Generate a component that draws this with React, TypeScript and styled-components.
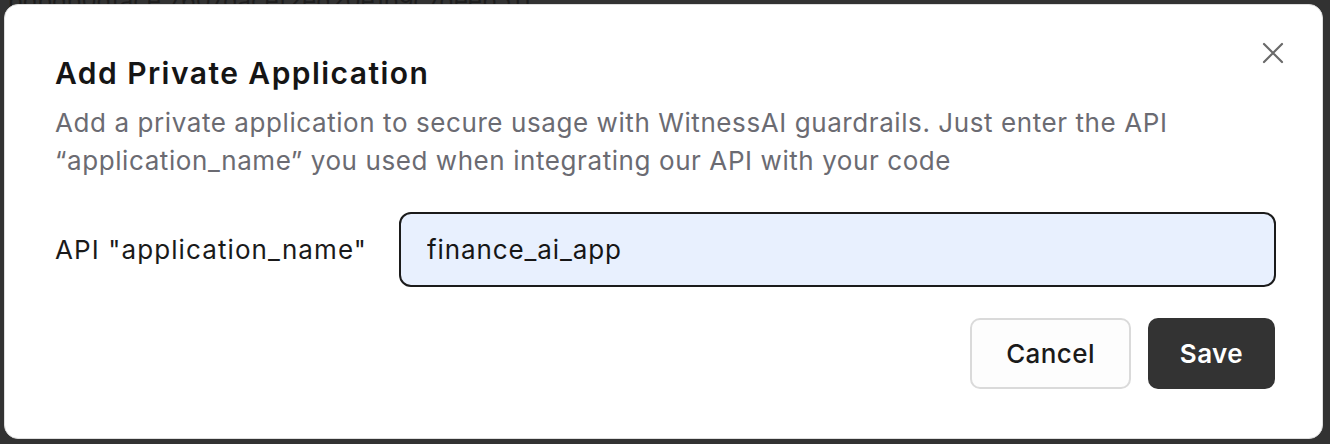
import React from "react";
import styled, { createGlobalStyle } from "styled-components";

const Global = createGlobalStyle`
  html, body { margin: 0; padding: 0; }
  body {
    width: 1330px;
    height: 444px;
    overflow: hidden;
    background: #2f2f2f;
    font-family: Inter, "Noto Sans", "Liberation Sans", sans-serif;
  }
`;

const Backdrop = styled.div`
  position: relative;
  width: 1330px;
  height: 444px;
  background: #323232;
  overflow: hidden;
`;

const BehindText = styled.div`
  padding: 0 0 0 8px;
  margin-top: -14px;
  font-size: 24px;
  color: #1d1d1d;
  white-space: nowrap;
`;

const Modal = styled.div`
  position: absolute;
  left: 4px;
  top: 4px;
  right: 7px;
  bottom: 5px;
  box-sizing: border-box;
  background: #ffffff;
  border: 1px solid #dedede;
  border-radius: 14px;
  padding: 46px 50px 0 50px;
  display: flex;
  flex-direction: column;
`;

const CloseButton = styled.button`
  position: absolute;
  top: 32px;
  right: 33px;
  width: 32px;
  height: 32px;
  border: none;
  background: transparent;
  padding: 0;
  display: flex;
  align-items: center;
  justify-content: center;
  cursor: pointer;
`;

const Title = styled.h2`
  margin: 0;
  font-size: 30px;
  font-weight: 600;
  letter-spacing: 1.45px;
  color: #151515;
  line-height: 44px;
`;

const Description = styled.p`
  margin: 9px 0 0 0;
  font-size: 26px;
  letter-spacing: 0.58px;
  line-height: 38px;
  color: #6b6b72;
  max-width: 1180px;
`;

const FieldRow = styled.div`
  margin-top: 32px;
  display: flex;
  align-items: center;
  gap: 32px;
`;

const Label = styled.label`
  font-size: 26px;
  font-weight: 400;
  letter-spacing: 1.1px;
  color: #1a1a1a;
  white-space: nowrap;
  width: 312px;
`;

const Input = styled.input`
  flex: 1;
  height: 75px;
  box-sizing: border-box;
  border: 2px solid #1b1b1b;
  border-radius: 12px;
  background: #e8f0fe;
  padding: 0 26px;
  font-family: inherit;
  font-size: 26px;
  letter-spacing: 0.9px;
  color: #161616;
  margin-right: -4px;
  outline: none;
`;

const Actions = styled.div`
  margin-top: 31px;
  display: flex;
  justify-content: flex-end;
  gap: 17px;
  margin-right: -3px;
`;

const Button = styled.button<{ $primary?: boolean }>`
  height: 71px;
  box-sizing: border-box;
  border-radius: 10px;
  font-family: inherit;
  font-size: 26px;
  letter-spacing: 0.4px;
  font-weight: ${(p) => (p.$primary ? 600 : 500)};
  padding: 0 ${(p) => (p.$primary ? 32 : 34)}px;
  cursor: pointer;
  border: ${(p) => (p.$primary ? "none" : "2px solid #dadada")};
  background: ${(p) => (p.$primary ? "#333333" : "#fdfdfd")};
  color: ${(p) => (p.$primary ? "#ffffff" : "#1a1a1a")};
`;

export default function App() {
  return (
    <>
      <Global />
      <Backdrop>
        <BehindText>bdbdb0dface 7607dacef2ed20e1b9c7deeb511</BehindText>
        <Modal>
          <CloseButton aria-label="Close">
            <svg width="22" height="22" viewBox="0 0 22 22">
              <path d="M2 2 L20 20 M20 2 L2 20" stroke="#6a6a6a" strokeWidth="2.2" strokeLinecap="round" />
            </svg>
          </CloseButton>
          <Title>Add Private Application</Title>
          <Description>
            Add a private application to secure usage with WitnessAI guardrails. Just enter the API
            “application_name” you used when integrating our API with your code
          </Description>
          <FieldRow>
            <Label>API "application_name"</Label>
            <Input defaultValue="finance_ai_app" />
          </FieldRow>
          <Actions>
            <Button>Cancel</Button>
            <Button $primary>Save</Button>
          </Actions>
        </Modal>
      </Backdrop>
    </>
  );
}
